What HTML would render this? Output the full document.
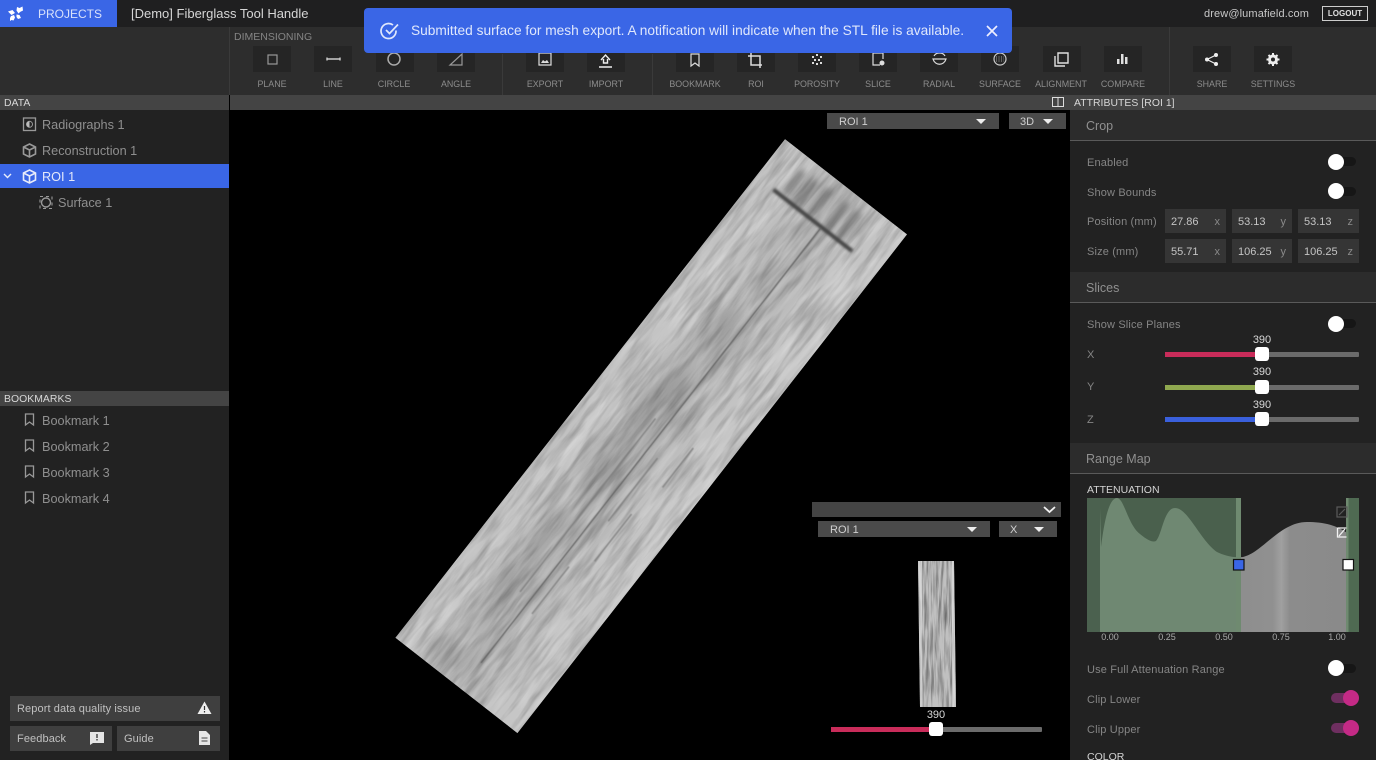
<!DOCTYPE html>
<html><head><meta charset="utf-8"><title>Lumafield</title>
<style>
*{box-sizing:border-box}
html,body{margin:0;padding:0;width:1376px;height:760px;overflow:hidden;background:#000;font-family:"Liberation Sans",sans-serif}
#root{position:relative;width:1376px;height:760px;overflow:hidden;background:#000}
.a{position:absolute}
.t{position:absolute;white-space:nowrap}
svg{position:absolute;overflow:hidden}
.btn{position:absolute;top:46px;width:38px;height:26px;background:#252525}
.lb{position:absolute;top:78px;width:80px;text-align:center;font-size:8.9px;line-height:12px;color:#8c8c8c;white-space:nowrap}
.row{position:absolute;left:42px;font-size:12.7px;line-height:16px;color:#8f8f8f;white-space:nowrap}
.hd{position:absolute;height:15px;background:#444;color:#d8d8d8;font-size:10.4px;line-height:17px;letter-spacing:.05px}
.sec{position:absolute;left:1070px;width:306px;background:#2c2c2c;border-bottom:1.5px solid #5a5a5a;color:#909090;font-size:12.5px;padding-left:16px}
.lab{position:absolute;left:1087px;font-size:11px;line-height:14px;color:#858585;white-space:nowrap;letter-spacing:.15px}
.inp{position:absolute;height:24px;background:#353535;font-size:11px;line-height:26px;color:#c4c4c4;padding-left:6px}
.inp i{position:absolute;right:6px;font-style:normal;color:#8a8a8a}
.tr{position:absolute;width:20px;height:9px;background:#161616;border-radius:5px}
.kn{position:absolute;width:16px;height:16px;border-radius:50%;background:#fff}
.dd{position:absolute;background:#4a4a4a;color:#d0d0d0;font-size:11px;line-height:18px;height:16px}
.car{position:absolute;width:0;height:0;border-left:5px solid transparent;border-right:5px solid transparent;border-top:5px solid #eee}
.sl{position:absolute;height:5px;background:#6b6b6b;border-radius:1px}
.fill{position:absolute;left:0;top:0;height:5px}
.th{position:absolute;width:14px;height:14px;background:#fff;border-radius:3px;top:-5px}
.v{position:absolute;width:40px;text-align:center;font-size:11px;line-height:13px;color:#d8d8d8}
.gb{position:absolute;background:#3f3f3f;color:#c0c0c0;font-size:11px;line-height:26px;padding-left:7px;letter-spacing:.1px}
.tick{position:absolute;top:632px;width:30px;text-align:center;font-size:9px;line-height:11px;color:#aaa}
</style></head><body><div id="root">

<!-- top bar -->
<div class="a" style="left:0;top:0;width:1376px;height:27px;background:#1f1f20"></div>
<div class="a" style="left:0;top:0;width:117px;height:27px;background:#3a66e6"></div>
<svg style="left:7px;top:5px" width="17" height="17" viewBox="0 0 17 17" fill="#fff"><path d="M1 6.500l4.500-1.500 2.500 3-3.500 2zM9.500 5.500l.5-3.500 2.500 1 3-1.500.5 4-3 1.500-1.500 1.500zM9.500 9.500l3 .5 1.500 3-3 1-1.500-2zM4 11l3-1 1 2.500-1.500 3-2-.5-1.500 1 0-3z"/></svg>
<div class="t" style="left:38px;top:6px;font-size:12px;line-height:16px;color:#d8e1fb">PROJECTS</div>
<div class="t" style="left:131px;top:6px;font-size:13px;line-height:16px;color:#d6d6d6">[Demo] Fiberglass Tool Handle</div>
<div class="t" style="left:1204px;top:7px;font-size:11px;line-height:14px;color:#c8c8c8;letter-spacing:.12px">drew@lumafield.com</div>
<div class="a" style="left:1322px;top:6px;width:46px;height:15px;border:1px solid #ccc;color:#e0e0e0;font-size:8px;font-weight:bold;line-height:13px;text-align:center">LOGOUT</div>

<!-- toolbar -->
<div class="a" style="left:0;top:27px;width:1376px;height:68px;background:#2d2d2d"></div>
<div class="a" style="left:229px;top:27px;width:1px;height:68px;background:#3a3a3a"></div>
<div class="a" style="left:502px;top:54px;width:1px;height:41px;background:#3a3a3a"></div>
<div class="a" style="left:652px;top:54px;width:1px;height:41px;background:#3a3a3a"></div>
<div class="a" style="left:1169px;top:27px;width:1px;height:68px;background:#3a3a3a"></div>
<div class="t" style="left:234px;top:31px;font-size:10.5px;line-height:13px;color:#858585">DIMENSIONING</div>

<div class="btn" style="left:253px"></div><div class="lb" style="left:232px">PLANE</div>
<div class="btn" style="left:314px"></div><div class="lb" style="left:293px">LINE</div>
<div class="btn" style="left:376px"></div><div class="lb" style="left:354px">CIRCLE</div>
<div class="btn" style="left:437px"></div><div class="lb" style="left:416px">ANGLE</div>
<div class="btn" style="left:526px"></div><div class="lb" style="left:505px">EXPORT</div>
<div class="btn" style="left:587px"></div><div class="lb" style="left:566px">IMPORT</div>
<div class="btn" style="left:676px"></div><div class="lb" style="left:655px">BOOKMARK</div>
<div class="btn" style="left:737px"></div><div class="lb" style="left:716px">ROI</div>
<div class="btn" style="left:798px"></div><div class="lb" style="left:777px">POROSITY</div>
<div class="btn" style="left:859px"></div><div class="lb" style="left:838px">SLICE</div>
<div class="btn" style="left:920px"></div><div class="lb" style="left:899px">RADIAL</div>
<div class="btn" style="left:981px"></div><div class="lb" style="left:960px">SURFACE</div>
<div class="btn" style="left:1043px"></div><div class="lb" style="left:1021px">ALIGNMENT</div>
<div class="btn" style="left:1104px"></div><div class="lb" style="left:1083px">COMPARE</div>
<div class="btn" style="left:1193px"></div><div class="lb" style="left:1172px">SHARE</div>
<div class="btn" style="left:1254px"></div><div class="lb" style="left:1233px">SETTINGS</div>

<svg style="left:0;top:0" width="1376" height="110" fill="none" stroke="#d8d8d8" stroke-width="1.2">
<rect x="268" y="55" width="9" height="9" stroke="#999"/>
<path d="M327 59h13M327 57.500v3M340 57.500v3" stroke="#ccc" stroke-width="1.400"/>
<circle cx="394" cy="59" r="6" stroke="#aaa" stroke-width="1.500"/>
<path d="M450 65h12V54z" stroke="#999"/>
<path d="M539 53h12v12h-12z" stroke="#ddd"/><path d="M541 63l2-3 2 1.500 2-1.500 2 3z" fill="#ddd" stroke="none"/>
<path d="M601 60l4.500-5 4.500 5M603.500 59v4h4v-4M599 67h13" stroke="#eee" stroke-width="1.400"/>
<path d="M691 54h8v12l-4-3-4 3z" stroke="#ddd"/>
<path d="M751 52v13h11M748 56h12v12" stroke="#ddd" stroke-width="1.500"/>
<g fill="#ddd" stroke="none"><rect x="812" y="56" width="2" height="2"/><rect x="816" y="54" width="2" height="2"/><rect x="820" y="56" width="2" height="2"/><rect x="814" y="59" width="2" height="2"/><rect x="818" y="59" width="2" height="2"/><rect x="812" y="62" width="2" height="2"/><rect x="816" y="63" width="2" height="2"/><rect x="820" y="62" width="2" height="2"/></g>
<path d="M880 65h-7V53h10v6" stroke="#ddd"/><circle cx="882" cy="63" r="2.500" fill="#ddd" stroke="none"/>
<path d="M933 59c2 7 11 7 13 0zM934 56c2-4 9-4 11 0" stroke="#ddd"/>
<circle cx="1000" cy="59" r="6" stroke="#ccc"/><path d="M996 57h8M996 59h8M996 61h8" stroke="#888" stroke-dasharray="1 1.500"/>
<path d="M1058 53h10v10h-10zM1055 56v10h10" stroke="#e0e0e0" stroke-width="1.400"/>
<g fill="#e0e0e0" stroke="none"><rect x="1117" y="59" width="2.500" height="5"/><rect x="1121" y="54" width="2.500" height="10"/><rect x="1125" y="57" width="2.500" height="7"/></g>
<path d="M1216 55l-9 4.500 9 4.500" stroke="#eee"/><g fill="#eee" stroke="none"><circle cx="1216" cy="55" r="2"/><circle cx="1207" cy="59.500" r="2"/><circle cx="1216" cy="64" r="2"/></g>
<circle cx="1273" cy="59.500" r="3.500" stroke="#eee" stroke-width="3"/><path d="M1273 53v2.500M1273 63.500v2.500M1266.500 59.500h2.500M1277 59.500h2.500M1268.500 55l1.800 1.800M1275.700 62.200l1.800 1.800M1268.500 64l1.800-1.800M1275.700 56.800l1.800-1.800" stroke="#eee" stroke-width="2"/>
</svg>

<!-- toast -->
<div class="a" style="left:364px;top:8px;width:648px;height:45px;background:#3a66e6;border-radius:4px"></div>
<svg style="left:380px;top:21px;overflow:visible" width="20" height="20" viewBox="0 0 20 20" fill="none" stroke="#dfe7fc" stroke-width="1.700"><path d="M16 9.500a7.500 7.500 0 1 1-3-5.500"/><path d="M6 9l3.500 3.500L18 3.500"/></svg>
<div class="t" style="left:411px;top:22px;font-size:13.72px;line-height:17px;color:#dfe7fc">Submitted surface for mesh export. A notification will indicate when the STL file is available.</div>
<svg style="left:986px;top:25px" width="12" height="12" fill="none" stroke="#eef" stroke-width="1.700"><path d="M1 1l10 10M11 1L1 11"/></svg>

<!-- header row -->
<div class="hd" style="left:0;top:95px;width:229px;padding-left:4px">DATA</div>
<div class="a" style="left:230px;top:95px;width:840px;height:15px;background:#444"></div>
<div class="hd" style="left:1070px;top:95px;width:306px;padding-left:4px">ATTRIBUTES [ROI 1]</div>
<svg style="left:1052px;top:97px" width="12" height="10" fill="none" stroke="#ddd"><rect x=".5" y=".5" width="11" height="9"/><path d="M6 0v10"/></svg>

<!-- left panel -->
<div class="a" style="left:0;top:110px;width:229px;height:650px;background:#222"></div>
<div class="a" style="left:0;top:164px;width:229px;height:24px;background:#3a66e6"></div>
<div class="row" style="top:117px">Radiographs 1</div>
<div class="row" style="top:143px">Reconstruction 1</div>
<div class="row" style="top:169px;color:#e4e9fa">ROI 1</div>
<div class="row" style="top:195px;left:58px">Surface 1</div>
<svg style="left:0;top:110px" width="229" height="110" fill="none" stroke="#999" stroke-width="1.100">
<rect x="23.500" y="8" width="12" height="12.500" stroke-width="1.300"/><circle cx="29.500" cy="14.300" r="3" stroke-width="1"/><path d="M29.500 11.300a3 3 0 0 0 0 6z" fill="#bbb" stroke="none"/>
<path d="M29.500 34l6 3v7l-6 3-6-3v-7zM23.500 37l6 3 6-3M29.500 40v7" stroke-width="1.600"/>
<path d="M29.500 60l6 3v7l-6 3-6-3v-7zM23.500 63l6 3 6-3M29.500 66v7" stroke="#e8ecfa" stroke-width="1.600"/>
<path d="M4 64l3.500 3.500L11 64" stroke="#e8ecfa" stroke-width="1.400"/>
<circle cx="46" cy="92.500" r="4.500" stroke-width="1.400"/><rect x="40" y="86.500" width="12" height="12" stroke-dasharray="3 3"/>
</svg>

<div class="hd" style="left:0;top:391px;width:229px;padding-left:4px">BOOKMARKS</div>
<div class="row" style="top:413px">Bookmark 1</div>
<div class="row" style="top:439px">Bookmark 2</div>
<div class="row" style="top:465px">Bookmark 3</div>
<div class="row" style="top:491px">Bookmark 4</div>
<svg style="left:0;top:391px" width="60" height="120" fill="none" stroke="#999" stroke-width="1.300">
<path d="M25.500 23h8v11l-4-3-4 3zM25.500 49h8v11l-4-3-4 3zM25.500 75h8v11l-4-3-4 3zM25.500 101h8v11l-4-3-4 3z"/>
</svg>

<div class="gb" style="left:10px;top:696px;width:210px;height:25px">Report data quality issue</div>
<div class="gb" style="left:10px;top:726px;width:102px;height:25px">Feedback</div>
<div class="gb" style="left:117px;top:726px;width:103px;height:25px">Guide</div>
<svg style="left:0;top:690px" width="229" height="70">
<path d="M204.500 11.500l7 12.500h-14z" fill="#eee"/><path d="M204.500 16v4M204.500 21v1.500" stroke="#333" stroke-width="1.200"/>
<path d="M90 42h14v11h-11l-3 2z" fill="#e6e6e6"/><path d="M97 44v4M97 49v1.500" stroke="#333" stroke-width="1.300"/>
<path d="M199 41h7l4 4v10h-11z" fill="#e6e6e6"/><path d="M201.500 48h6M201.500 51h6" stroke="#444"/>
</svg>

<!-- viewer -->
<svg style="left:0;top:0;pointer-events:none" width="1376" height="760">
<defs>
<filter id="gr" x="0" y="0" width="100%" height="100%"><feTurbulence type="fractalNoise" baseFrequency="0.16 0.02" numOctaves="3" seed="7"/><feColorMatrix values="0 0 0 0 0  0 0 0 0 0  0 0 0 0 0  2 0 0 0 -0.800"/></filter>
<filter id="gl" x="0" y="0" width="100%" height="100%"><feTurbulence type="fractalNoise" baseFrequency="0.12 0.018" numOctaves="3" seed="21"/><feColorMatrix values="0 0 0 0 1  0 0 0 0 1  0 0 0 0 1  2 0 0 0 -0.850"/></filter>
<filter id="b1" x="-500%" y="-10%" width="1100%" height="120%"><feGaussianBlur stdDeviation=".6"/></filter>
<filter id="b2" x="-20%" y="-200%" width="140%" height="500%"><feGaussianBlur stdDeviation="1.300"/></filter>
<filter id="b8" x="-50%" y="-50%" width="200%" height="200%"><feGaussianBlur stdDeviation="9"/></filter>
<filter id="b4" x="-50%" y="-50%" width="200%" height="200%"><feGaussianBlur stdDeviation="3.500"/></filter>
<filter id="gr2" x="0" y="0" width="100%" height="100%"><feTurbulence type="fractalNoise" baseFrequency="0.45 0.03" numOctaves="3" seed="3"/><feColorMatrix values="0 0 0 0 0  0 0 0 0 0  0 0 0 0 0  2.200 0 0 0 -0.850"/></filter>
<linearGradient id="wid" x1="0" x2="1" y1="0" y2="0"><stop offset="0" stop-color="#bebebe"/><stop offset=".15" stop-color="#c6c6c6"/><stop offset=".4" stop-color="#b6b6b6"/><stop offset=".55" stop-color="#b0b0b0"/><stop offset=".75" stop-color="#c2c2c2"/><stop offset="1" stop-color="#c8c8c8"/></linearGradient>
<linearGradient id="grey" x1="1241" x2="1347" y1="0" y2="0" gradientUnits="userSpaceOnUse"><stop offset="0" stop-color="#8e8e8e"/><stop offset=".3" stop-color="#909090"/><stop offset=".38" stop-color="#a0a0a0"/><stop offset=".46" stop-color="#8c8c8c"/><stop offset="1" stop-color="#8a8a8a"/></linearGradient>
<clipPath id="cp"><rect width="155" height="633"/></clipPath>
<clipPath id="cp2"><path d="M0 0H36L38 146H2Z"/></clipPath>
<clipPath id="cl"><rect x="1100" y="498" width="136" height="134"/></clipPath>
<clipPath id="cr"><rect x="1241" y="498" width="105" height="134"/></clipPath>
<path id="curve" d="M1100 632V508L1101 547C1105 515 1110 498 1117 498 1124 498 1128 525 1140 534 1146 539 1152 543 1156 541 1162 535 1164 508 1175 508 1188 508 1200 540 1217 552 1225 556 1235 558 1243 557 1262 553 1280 522 1307 522 1325 522 1338 526 1347 533V632Z"/>
</defs>
<g transform="translate(785 139) rotate(38)" clip-path="url(#cp)">
<rect width="155" height="633" fill="url(#wid)"/>
<g filter="url(#b8)" fill="#7a7a7a" opacity=".42">
<ellipse cx="64" cy="192" rx="14" ry="30"/>
<ellipse cx="60" cy="285" rx="18" ry="46"/>
<ellipse cx="58" cy="370" rx="15" ry="45"/>
<ellipse cx="55" cy="470" rx="13" ry="45"/>
<ellipse cx="54" cy="530" rx="14" ry="36"/>
<ellipse cx="50" cy="615" rx="18" ry="20"/>
</g>
<rect width="155" height="633" filter="url(#gr)" fill="#000" opacity=".24"/>
<rect width="155" height="633" filter="url(#gl)" opacity=".3"/>
<g filter="url(#b4)" stroke="#4a4a4a" fill="none" opacity=".62">
<path d="M34 14v30M50 14v32M66 12v34M88 12v34M104 12v34" stroke-width="7"/>
</g>
<rect x="22" y="45" width="100" height="4" fill="#404040" filter="url(#b2)"/>
<rect x="82.400" y="48" width="1.200" height="552" fill="#5c5c5c" filter="url(#b1)"/>
<g filter="url(#b1)" fill="none">
<path d="M70 300V520M96 330V410M110 390V450M93 470V530M118 300V350" stroke="#7c7c7c" stroke-width="1.300"/>
</g>
</g>

<!-- minimap slice -->
<g transform="translate(918 561)" clip-path="url(#cp2)">
<rect width="39" height="146" fill="#c0c0c0"/>
<rect width="39" height="146" filter="url(#gr2)" fill="#000" opacity=".42"/>
<rect x="0" width="4" height="146" fill="#e4e4e4" opacity=".6"/><rect x="34" width="5" height="146" fill="#e4e4e4" opacity=".6"/>
</g>
</svg>

<!-- dropdowns -->
<div class="dd" style="left:827px;top:113px;width:172px;padding-left:12px">ROI 1</div><div class="car" style="left:976px;top:119px"></div>
<div class="dd" style="left:1009px;top:113px;width:57px;padding-left:11px">3D</div><div class="car" style="left:1043px;top:119px"></div>
<div class="a" style="left:812px;top:502px;width:249px;height:15px;background:#444"></div>
<svg style="left:1043px;top:506px" width="13" height="8" fill="none" stroke="#f0f0f0" stroke-width="1.800"><path d="M1 1l5.500 5L12 1"/></svg>
<div class="dd" style="left:818px;top:521px;width:172px;padding-left:12px">ROI 1</div><div class="car" style="left:967px;top:527px"></div>
<div class="dd" style="left:999px;top:521px;width:58px;padding-left:11px">X</div><div class="car" style="left:1034px;top:527px"></div>
<div class="v" style="left:916px;top:709px">390</div>
<div class="sl" style="left:831px;top:727px;width:211px"><div class="fill" style="width:105px;background:#c92c5a"></div><div class="th" style="left:98px"></div></div>

<!-- right panel -->
<div class="a" style="left:1070px;top:110px;width:306px;height:650px;background:#222"></div>
<div class="sec" style="top:110px;height:31px;line-height:32px">Crop</div>
<div class="lab" style="top:156px">Enabled</div>
<div class="tr" style="left:1336px;top:157px"></div><div class="kn" style="left:1328px;top:154px"></div>
<div class="lab" style="top:186px">Show Bounds</div>
<div class="tr" style="left:1336px;top:187px"></div><div class="kn" style="left:1328px;top:183px"></div>
<div class="lab" style="top:215px">Position (mm)</div>
<div class="lab" style="top:245px">Size (mm)</div>
<div class="inp" style="left:1165px;top:209px;width:61px">27.86<i>x</i></div>
<div class="inp" style="left:1232px;top:209px;width:60px">53.13<i>y</i></div>
<div class="inp" style="left:1298px;top:209px;width:61px">53.13<i>z</i></div>
<div class="inp" style="left:1165px;top:239px;width:61px">55.71<i>x</i></div>
<div class="inp" style="left:1232px;top:239px;width:60px">106.25<i>y</i></div>
<div class="inp" style="left:1298px;top:239px;width:61px">106.25<i>z</i></div>

<div class="sec" style="top:272px;height:31px;line-height:33px">Slices</div>
<div class="lab" style="top:318px">Show Slice Planes</div>
<div class="tr" style="left:1336px;top:319px"></div><div class="kn" style="left:1328px;top:316px"></div>
<div class="lab" style="top:348px">X</div>
<div class="lab" style="top:380px">Y</div>
<div class="lab" style="top:413px">Z</div>
<div class="v" style="left:1242px;top:334px">390</div>
<div class="v" style="left:1242px;top:366px">390</div>
<div class="v" style="left:1242px;top:399px">390</div>
<div class="sl" style="left:1165px;top:352px;width:194px"><div class="fill" style="width:97px;background:#c92c5a"></div><div class="th" style="left:90px"></div></div>
<div class="sl" style="left:1165px;top:385px;width:194px"><div class="fill" style="width:97px;background:#8fa84f"></div><div class="th" style="left:90px"></div></div>
<div class="sl" style="left:1165px;top:417px;width:194px"><div class="fill" style="width:97px;background:#3a60dc"></div><div class="th" style="left:90px"></div></div>

<div class="sec" style="top:443px;height:31px;line-height:33px">Range Map</div>
<div class="t" style="left:1087px;top:484px;font-size:10.5px;line-height:13px;color:#d4d4d4">ATTENUATION</div>
<svg style="left:0;top:0;pointer-events:none" width="1376" height="760">
<rect x="1087" y="498" width="154" height="134" fill="#4a604d"/>
<rect x="1087" y="498" width="13" height="134" fill="#4b614f"/>
<use href="#curve" fill="#6f8872" clip-path="url(#cl)"/>
<rect x="1236" y="498" width="5" height="134" fill="#6f8a70"/>
<use href="#curve" fill="url(#grey)" clip-path="url(#cr)"/>
<rect x="1346" y="498" width="13" height="134" fill="#4f6a52"/>
<rect x="1346" y="498" width="2.500" height="134" fill="#6f8a70"/>
<path d="M1337 507h10v10h-10zM1339 515l6-6" fill="none" stroke="#5a5a5a" stroke-width="1.200"/>
<path d="M1337.500 528h9M1337.500 528v9h9M1339 536l6-7" fill="none" stroke="#f2f2f2" stroke-width="1.300"/>
<rect x="1233.500" y="559.500" width="10.500" height="10.500" fill="#3a66e6" stroke="#111" stroke-width="1.200"/>
<rect x="1343" y="559.500" width="10.500" height="10.500" fill="#fff" stroke="#111" stroke-width="1.200"/>
</svg>
<div class="tick" style="left:1095px">0.00</div>
<div class="tick" style="left:1152px">0.25</div>
<div class="tick" style="left:1209px">0.50</div>
<div class="tick" style="left:1266px">0.75</div>
<div class="tick" style="left:1322px">1.00</div>

<div class="lab" style="top:663px">Use Full Attenuation Range</div>
<div class="tr" style="left:1336px;top:664px"></div><div class="kn" style="left:1328px;top:660px"></div>
<div class="lab" style="top:693px">Clip Lower</div>
<div class="a" style="left:1331px;top:693px;width:26px;height:10px;background:#6e2f60;border-radius:5px"></div><div class="kn" style="left:1343px;top:690px;background:#c42a86"></div>
<div class="lab" style="top:723px">Clip Upper</div>
<div class="a" style="left:1331px;top:723px;width:26px;height:10px;background:#6e2f60;border-radius:5px"></div><div class="kn" style="left:1343px;top:720px;background:#c42a86"></div>
<div class="t" style="left:1087px;top:751px;font-size:10.5px;line-height:13px;color:#d4d4d4">COLOR</div>

</div></body></html>
